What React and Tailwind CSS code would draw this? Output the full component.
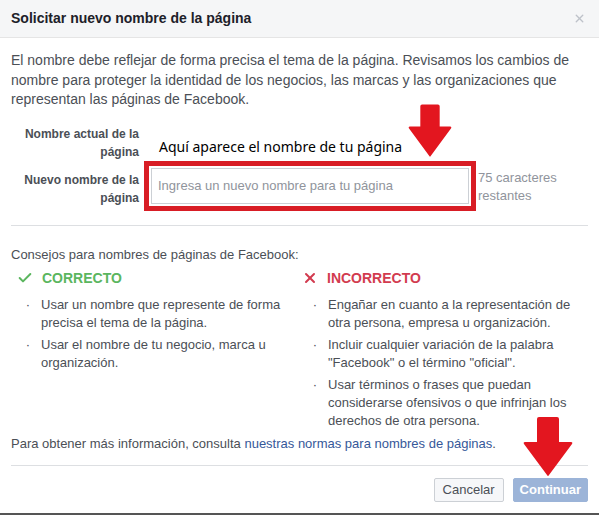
import { Check, X } from 'lucide-react';

function DownArrow({ className }) {
  return (
    <svg className={className} viewBox="0 0 50 60" fill="#e3161f">
      <path d="M14 2 Q14 0 16 0 H34 Q36 0 36 2 V25 H48 Q50 25 49 27 L26 58 Q25 60 24 58 L1 27 Q0 25 2 25 H14 Z" />
    </svg>
  );
}

function TipList({ items }) {
  return (
    <ul className="mt-[8px] flex flex-col gap-[4px] pl-[14px] pr-[10px]">
      {items.map((t) => (
        <li key={t} className="flex gap-[10px] text-[13px] leading-[18px] text-[#4b4f56]">
          <span className="w-[6px] shrink-0 text-center">·</span>
          <span>{t}</span>
        </li>
      ))}
    </ul>
  );
}

export default function App() {
  return (
    <div className="relative w-[599px] h-[515px] overflow-hidden bg-white font-['Liberation_Sans',Arial,sans-serif] text-[#1d2129]">
      {/* header */}
      <div className="flex h-[38px] items-center justify-between border-b border-[#e5e5e5] bg-[#f5f6f7] pl-[11px] pr-[13px]">
        <h3 className="text-[14px] font-bold">Solicitar nuevo nombre de la página</h3>
        <X size={13} strokeWidth={2.5} className="text-[#bec2c9]" />
      </div>

      <div className="px-[11px]">
        <p className="pt-[13px] text-[14px] leading-[19.5px] text-[#4b4f56]">
          El nombre debe reflejar de forma precisa el tema de la página. Revisamos los cambios de nombre para
          proteger la identidad de los negocios, las marcas y las organizaciones que representan las páginas de
          Facebook.
        </p>

        {/* current name */}
        <div className="mt-[15px] flex items-end">
          <div className="w-[128px] text-right text-[12px] font-bold leading-[18px] text-[#4b4f56]">
            Nombre actual de la página
          </div>
          <div className="ml-[20px] pb-[4px] font-['Noto_Sans',sans-serif] text-[14px] leading-[20px] text-black">
            Aquí aparece el nombre de tu página
          </div>
        </div>

        {/* new name */}
        <div className="flex items-center">
          <div className="w-[128px] pt-[6px] text-right text-[12px] font-bold leading-[18px] text-[#4b4f56]">
            Nuevo nombre de la página
          </div>
          <div className="ml-[5px] border-[5px] border-[#d81d25] p-[2px]">
            <div className="flex h-[36px] w-[318px] items-center border border-[#ccd0d5] px-[6px] text-[13px] text-[#90949c]">
              Ingresa un nuevo nombre para tu página
            </div>
          </div>
          <div className="ml-[2px] pt-[2px] text-[13px] leading-[18px] text-[#90949c]">
            75 caracteres
            <br />
            restantes
          </div>
        </div>

        <div className="mt-[14px] border-t border-[#dddfe2]" />

        <p className="mt-[20px] text-[13px] leading-[18px] text-[#4b4f56]">
          Consejos para nombres de páginas de Facebook:
        </p>

        <div className="mt-[4px] grid grid-cols-[287px_1fr]">
          <div>
            <div className="flex items-center gap-[9px] pl-[6px] text-[14px] font-bold leading-[20px] text-[#5bb65f]">
              <Check size={16} strokeWidth={3} />
              CORRECTO
            </div>
            <TipList
              items={[
                'Usar un nombre que represente de forma precisa el tema de la página.',
                'Usar el nombre de tu negocio, marca u organización.',
              ]}
            />
          </div>
          <div>
            <div className="flex items-center gap-[9px] pl-[4px] text-[14px] font-bold leading-[20px] text-[#d23b4f]">
              <X size={16} strokeWidth={3} />
              INCORRECTO
            </div>
            <TipList
              items={[
                'Engañar en cuanto a la representación de otra persona, empresa u organización.',
                'Incluir cualquier variación de la palabra "Facebook" o el término "oficial".',
                'Usar términos o frases que puedan considerarse ofensivos o que infrinjan los derechos de otra persona.',
              ]}
            />
          </div>
        </div>

        <p className="mt-[5px] text-[13px] leading-[18px] text-[#4b4f56]">
          Para obtener más información, consulta{' '}
          <span className="text-[#365899]">nuestras normas para nombres de páginas</span>.
        </p>

        <div className="mt-[12px] border-t border-[#dddfe2]" />

        <div className="mt-[12px] flex justify-end gap-[9px]">
          <button className="h-[24px] rounded-[2px] border border-[#ccd0d5] bg-[#f6f7f9] px-[8px] text-[13px] text-[#4b4f56]">
            Cancelar
          </button>
          <button className="h-[24px] rounded-[2px] border border-[#9cb4d8] bg-[#9cb4d8] px-[6px] text-[13px] font-bold text-white">
            Continuar
          </button>
        </div>
      </div>

      <div className="absolute bottom-0 left-0 h-[2px] w-full bg-[#555]" />

      {/* annotation arrows */}
      <DownArrow className="absolute left-[408px] top-[104px] h-[54px] w-[44px]" />
      <DownArrow className="absolute left-[523px] top-[417px] h-[60px] w-[50px]" />
    </div>
  );
}
